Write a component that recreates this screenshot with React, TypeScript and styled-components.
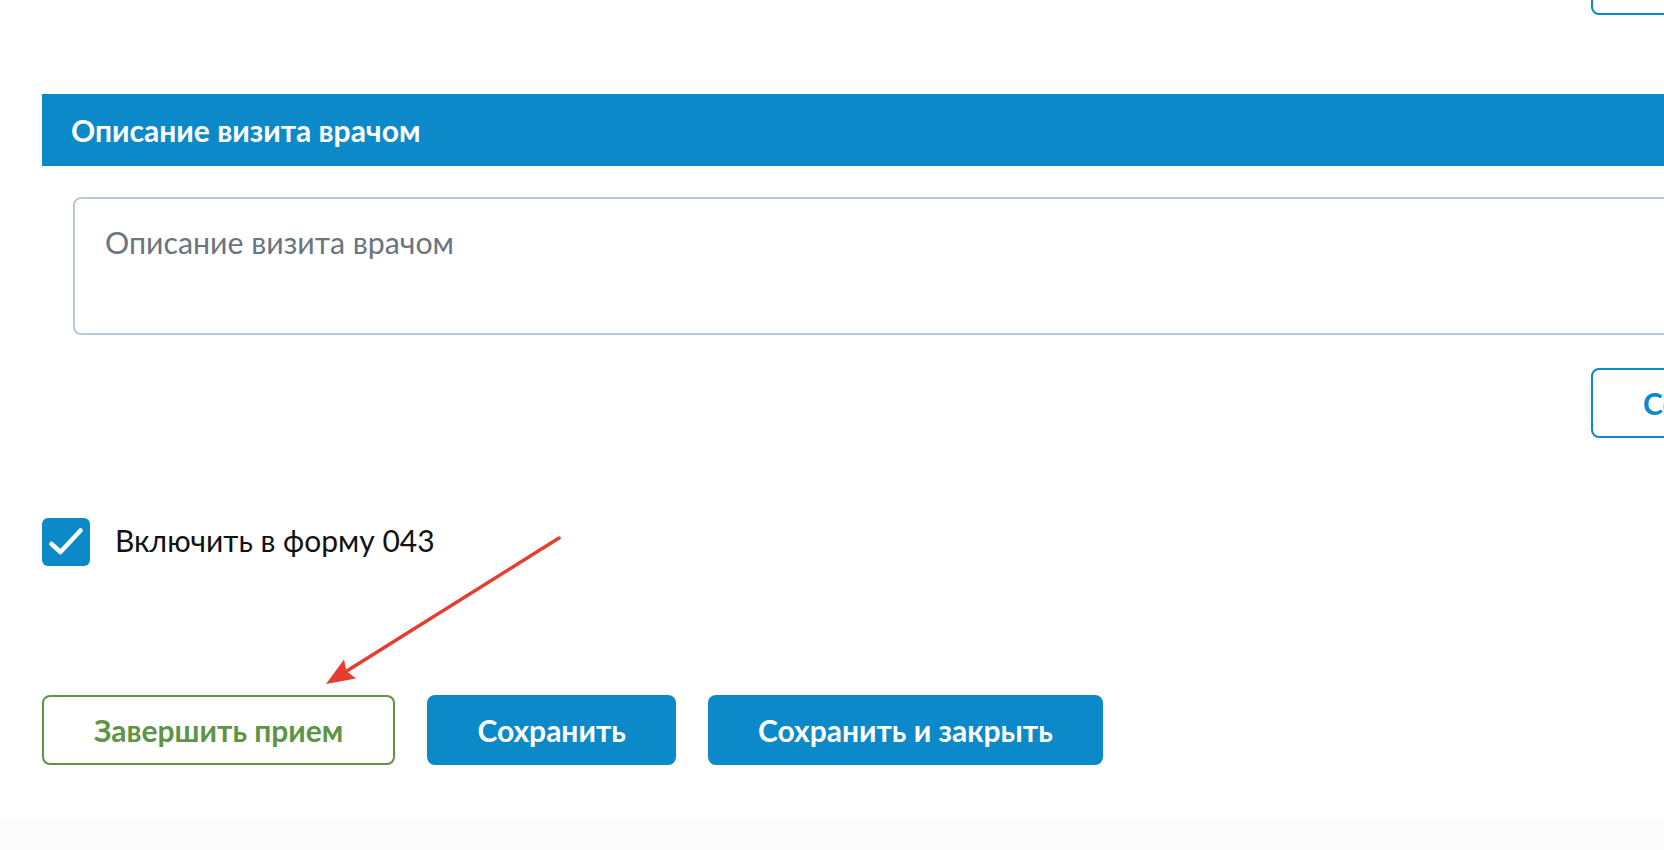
import styled, { createGlobalStyle } from "styled-components";

const GlobalStyle = createGlobalStyle`
  html, body {
    margin: 0;
    padding: 0;
    background: #ffffff;
    overflow: hidden;
  }
  body {
    font-family: Lato, "Open Sans", "Noto Sans", sans-serif;
  }
  * { box-sizing: border-box; }
`;

const BLUE = "#0b89c9";
const GREEN = "#5d9445";

const Page = styled.div`
  position: relative;
  width: 1664px;
  height: 850px;
  overflow: hidden;
  display: flex;
  flex-direction: column;
`;

const Content = styled.div`
  flex: 1;
  width: 1869px;
  padding-left: 42px;
  display: flex;
  flex-direction: column;
`;

const TopRow = styled.div`
  height: 15px;
  overflow: hidden;
  display: flex;
  justify-content: flex-end;
  align-items: flex-end;
  padding-right: 31px;
`;

const SectionHeader = styled.div`
  margin-top: 79px;
  height: 72px;
  background: ${BLUE};
  display: flex;
  align-items: center;
  padding-left: 29px;
  color: #fff;
  font-size: 30px;
  font-weight: 700;
`;

const SectionBody = styled.div`
  padding: 31px 31px 0 31px;
  display: flex;
  flex-direction: column;
`;

const Description = styled.textarea`
  display: block;
  width: 100%;
  height: 138px;
  border: 2px solid #b9c8d9;
  border-radius: 8px;
  padding: 25px 30px;
  resize: none;
  font-family: inherit;
  font-size: 30.3px;
  color: #222;
  outline: none;
  &::placeholder {
    color: #6b7480;
  }
`;

const ActionRow = styled.div`
  margin-top: 33px;
  display: flex;
  justify-content: flex-end;
`;

const Button = styled.button<{ $variant: "primary" | "outline" | "success"; $width?: number }>`
  flex: none;
  height: 70px;
  ${(p) => (p.$width ? `width: ${p.$width}px; padding: 0 0 0 50px; text-align: left;` : "padding: 0 50px;")}
  border-radius: 8px;
  font-family: inherit;
  font-size: 30px;
  font-weight: 700;
  white-space: nowrap;
  cursor: pointer;
  ${(p) =>
    p.$variant === "primary"
      ? `background: ${BLUE}; color: #fff; border: none;`
      : p.$variant === "outline"
      ? `background: #fff; color: ${BLUE}; border: 2px solid ${BLUE};`
      : `background: #fff; color: ${GREEN}; border: 2px solid ${GREEN};`}
`;

const CheckRow = styled.label`
  margin-top: 80px;
  display: flex;
  align-items: center;
  gap: 25px;
  font-size: 30px;
  color: #111;
  cursor: pointer;
`;

const CheckText = styled.span`
  padding-bottom: 4px;
`;

const CheckBox = styled.span`
  width: 48px;
  height: 48px;
  border-radius: 6px;
  background: ${BLUE};
  display: flex;
  align-items: center;
  justify-content: center;
`;

const ButtonRow = styled.div`
  margin-top: 129px;
  display: flex;
  gap: 32px;
`;

const Footer = styled.div`
  height: 32px;
  background: #fbfbfb;
  flex: none;
`;

const ArrowLayer = styled.svg`
  position: absolute;
  left: 0;
  top: 0;
  pointer-events: none;
`;

export default function App() {
  return (
    <>
      <GlobalStyle />
      <Page>
        <Content>
          <TopRow>
            <Button $variant="outline" $width={247}>
              Сохранить
            </Button>
          </TopRow>

          <SectionHeader>Описание визита врачом</SectionHeader>
          <SectionBody>
            <Description placeholder="Описание визита врачом" />
            <ActionRow>
              <Button $variant="outline" $width={247}>
                Сохранить
              </Button>
            </ActionRow>
          </SectionBody>

          <CheckRow>
            <CheckBox>
              <svg width="48" height="48" viewBox="0 0 48 48">
                <path
                  d="M9.5 26 L18.5 34 L38.5 12.5"
                  fill="none"
                  stroke="#fff"
                  strokeWidth="4.5"
                  strokeLinecap="round"
                  strokeLinejoin="round"
                />
              </svg>
            </CheckBox>
            <CheckText>Включить в форму 043</CheckText>
          </CheckRow>

          <ButtonRow>
            <Button $variant="success">Завершить прием</Button>
            <Button $variant="primary">Сохранить</Button>
            <Button $variant="primary">Сохранить и закрыть</Button>
          </ButtonRow>
        </Content>
        <Footer />

        {/* annotation arrow over the page */}
        <ArrowLayer width="1664" height="850" viewBox="0 0 1664 850">
          <line x1="559" y1="538" x2="346" y2="671.5" stroke="#e53d30" strokeWidth="3.5" strokeLinecap="round" />
          <polygon points="326,684 344,659.5 346.5,671 356,678.5" fill="#e53d30" />
        </ArrowLayer>
      </Page>
    </>
  );
}
